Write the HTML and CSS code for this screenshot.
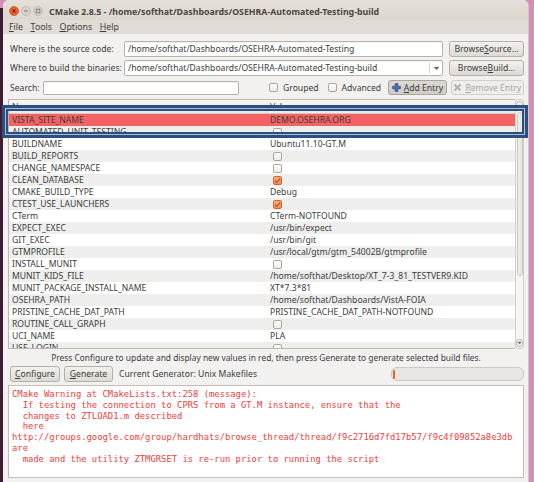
FILE: index.html
```html
<!DOCTYPE html>
<html>
<head>
<meta charset="utf-8">
<title>CMake</title>
<link rel="stylesheet" href="styles.css">
</head>
<body>
<div class="desktop">
  <div class="edge-left"></div>
  <div class="window">
    <header class="titlebar">
      <div class="wbtns">
        <svg class="wb" width="10" height="10" viewBox="0 0 10 10"><circle cx="5" cy="5" r="4.5" fill="#e8612d" stroke="#c44a1c" stroke-width="0.6"/><path d="M3.3 3.3 L6.7 6.7 M6.7 3.3 L3.3 6.7" stroke="#5a2510" stroke-width="1"/></svg>
        <svg class="wb" width="10" height="10" viewBox="0 0 10 10"><circle cx="5" cy="5" r="4.5" fill="#d6d1c9" stroke="#b3ada4" stroke-width="0.6"/><path d="M3 5 H7" stroke="#7a746c" stroke-width="1"/></svg>
        <svg class="wb" width="10" height="10" viewBox="0 0 10 10"><circle cx="5" cy="5" r="4.5" fill="#d6d1c9" stroke="#b3ada4" stroke-width="0.6"/><rect x="3.2" y="3.2" width="3.6" height="3.6" fill="none" stroke="#7a746c" stroke-width="0.9"/></svg>
      </div>
      <div class="title">CMake 2.8.5 - /home/softhat/Dashboards/OSEHRA-Automated-Testing-build</div>
    </header>
    <nav class="menubar">
      <span><u>F</u>ile</span>
      <span><u>T</u>ools</span>
      <span><u>O</u>ptions</span>
      <span><u>H</u>elp</span>
    </nav>
    <main class="content">
      <div class="pathrow">
        <div class="plabel">Where is the source code:</div>
        <div class="field">/home/softhat/Dashboards/OSEHRA-Automated-Testing</div>
        <div class="btn browse">Browse <u>S</u>ource...</div>
      </div>
      <div class="pathrow">
        <div class="plabel">Where to build the binaries:</div>
        <div class="field combo">
          <span class="combo-text">/home/softhat/Dashboards/OSEHRA-Automated-Testing-build</span>
          <span class="combo-arrow"><svg width="7" height="5" viewBox="0 0 7 5"><path d="M0.5 1 L3.5 4 L6.5 1 Z" fill="#6e6962"/></svg></span>
        </div>
        <div class="btn browse">Browse <u>B</u>uild...</div>
      </div>
      <div class="searchrow">
        <div class="slabel">Search:</div>
        <div class="field search"></div>
        <div class="check first"><span class="cb"></span>Grouped</div>
        <div class="check"><span class="cb"></span>Advanced</div>
        <div class="btn tool add">
          <svg width="9" height="9" viewBox="0 0 9 9"><path d="M3.2 0.6 H5.8 V3.2 H8.4 V5.8 H5.8 V8.4 H3.2 V5.8 H0.6 V3.2 H3.2 Z" fill="#3f6fb5" stroke="#1f3f78" stroke-width="0.6"/></svg>
          <span><u>A</u>dd Entry</span>
        </div>
        <div class="btn tool remove">
          <svg width="9" height="9" viewBox="0 0 9 9"><path d="M1.5 1.5 L7.5 7.5 M7.5 1.5 L1.5 7.5" stroke="#b5b1ab" stroke-width="2.2"/></svg>
          <span><u>R</u>emove Entry</span>
        </div>
      </div>

      <div class="table">
        <div class="grid">
          <div class="hdr"><span class="c1">Name</span><span class="c2">Value</span></div>
          <div class="row hl"><span class="c1">VISTA_SITE_NAME</span><span class="c2">DEMO.OSEHRA.ORG</span></div>
          <div class="row alt"><span class="c1">AUTOMATED_UNIT_TESTING</span><span class="c2"><span class="cb"></span></span></div>
          <div class="row"><span class="c1">BUILDNAME</span><span class="c2">Ubuntu11.10-GT.M</span></div>
          <div class="row alt"><span class="c1">BUILD_REPORTS</span><span class="c2"><span class="cb"></span></span></div>
          <div class="row"><span class="c1">CHANGE_NAMESPACE</span><span class="c2"><span class="cb"></span></span></div>
          <div class="row alt"><span class="c1">CLEAN_DATABASE</span><span class="c2"><span class="cb on"><svg width="7" height="7" viewBox="0 0 7 7"><path d="M1 3.6 L2.8 5.4 L6.2 1.2" fill="none" stroke="#c9501f" stroke-width="1.3"/></svg></span></span></div>
          <div class="row"><span class="c1">CMAKE_BUILD_TYPE</span><span class="c2">Debug</span></div>
          <div class="row alt"><span class="c1">CTEST_USE_LAUNCHERS</span><span class="c2"><span class="cb on"><svg width="7" height="7" viewBox="0 0 7 7"><path d="M1 3.6 L2.8 5.4 L6.2 1.2" fill="none" stroke="#c9501f" stroke-width="1.3"/></svg></span></span></div>
          <div class="row"><span class="c1">CTerm</span><span class="c2">CTerm-NOTFOUND</span></div>
          <div class="row alt"><span class="c1">EXPECT_EXEC</span><span class="c2">/usr/bin/expect</span></div>
          <div class="row"><span class="c1">GIT_EXEC</span><span class="c2">/usr/bin/git</span></div>
          <div class="row alt"><span class="c1">GTMPROFILE</span><span class="c2">/usr/local/gtm/gtm_54002B/gtmprofile</span></div>
          <div class="row"><span class="c1">INSTALL_MUNIT</span><span class="c2"><span class="cb"></span></span></div>
          <div class="row alt"><span class="c1">MUNIT_KIDS_FILE</span><span class="c2">/home/softhat/Desktop/XT_7-3_81_TESTVER9.KID</span></div>
          <div class="row"><span class="c1">MUNIT_PACKAGE_INSTALL_NAME</span><span class="c2">XT*7.3*81</span></div>
          <div class="row alt"><span class="c1">OSEHRA_PATH</span><span class="c2">/home/softhat/Dashboards/VistA-FOIA</span></div>
          <div class="row"><span class="c1">PRISTINE_CACHE_DAT_PATH</span><span class="c2">PRISTINE_CACHE_DAT_PATH-NOTFOUND</span></div>
          <div class="row alt"><span class="c1">ROUTINE_CALL_GRAPH</span><span class="c2"><span class="cb"></span></span></div>
          <div class="row"><span class="c1">UCI_NAME</span><span class="c2">PLA</span></div>
          <div class="row alt"><span class="c1">USE_LOGIN</span><span class="c2"><span class="cb"></span></span></div>
        </div>
        <div class="vscroll">
          <div class="step up"></div>
          <div class="thumb"></div>
          <div class="spacer"></div>
          <div class="step down"><svg width="5" height="4" viewBox="0 0 5 4"><path d="M0.3 0.8 L2.5 3.3 L4.7 0.8 Z" fill="#77716a"/></svg></div>
        </div>
      </div>

      <div class="hint">Press Configure to update and display new values in red, then press Generate to generate selected build files.</div>

      <div class="actions">
        <div class="btn act"><u>C</u>onfigure</div>
        <div class="btn act gen"><u>G</u>enerate</div>
        <div class="generator">Current Generator: Unix Makefiles</div>
        <div class="progress"><span class="pfill"></span></div>
      </div>

      <pre class="output">CMake Warning at CMakeLists.txt:258 (message):
  If testing the connection to CPRS from a GT.M instance, ensure that the
  changes to ZTLOAD1.m described
  here
http://groups.google.com/group/hardhats/browse_thread/thread/f9c2716d7fd17b57/f9c4f09852a8e3db
are
  made and the utility ZTMGRSET is re-run prior to running the script</pre>
    </main>
  </div>
  <div class="edge-right"></div>
  <div class="annot"></div>
</div>
</body>
</html>
```

FILE: styles.css
```css
* { box-sizing: border-box; }
html, body { margin: 0; padding: 0; }
body {
  width: 534px;
  height: 482px;
  overflow: hidden;
  font-family: "Noto Sans", "DejaVu Sans", sans-serif;
  font-size: 8.6px;
  color: #3c3c3c;
}
u { text-decoration: underline; text-underline-offset: 1px; }

.desktop {
  position: relative;
  display: flex;
  width: 534px;
  height: 482px;
  background: #d88db7;
}
.edge-left { width: 3px; background: #3d1d33; margin-top: 8px; }
.edge-right { width: 5px; background: #d88db7; }

.window {
  flex: 1;
  display: flex;
  flex-direction: column;
  background: #f2f1f0;
  border-radius: 6px 6px 0 0;
  overflow: hidden;
  border-right: 1px solid #cfcbc4;
}

.titlebar {
  height: 20px;
  display: flex;
  align-items: center;
  background: linear-gradient(#e4e0d9, #dcd8d0);
}
.wbtns { display: flex; gap: 2px; padding-left: 6px; margin-top: 2px; }
.wb { display: block; }
.title {
  margin-left: 6px;
  font-weight: bold;
  font-size: 8.8px;
  color: #4a4740;
  margin-top: 3px;
  white-space: nowrap;
}

.menubar {
  height: 14px;
  display: flex;
  align-items: center;
  gap: 7.5px;
  padding-left: 6px;
  background: #e0dcd5;
  font-size: 8.8px;
  color: #3c3c3c;
}

.content {
  flex: 1;
  display: flex;
  flex-direction: column;
  padding: 0 4px 0 5px;
}

.pathrow {
  display: flex;
  align-items: center;
  height: 16px;
  margin-top: 7px;
}
.pathrow + .pathrow { margin-top: 3px; }
.plabel { width: 116px; padding-left: 2px; }
.field {
  height: 16px;
  background: #fff;
  border: 1px solid #b7b2aa;
  border-radius: 2px;
  box-shadow: inset 0 1px 1px rgba(0,0,0,0.06);
  padding: 0 3px;
  line-height: 14px;
  white-space: nowrap;
  overflow: hidden;
}
.pathrow .field { width: 319px; }
.combo { display: flex; padding-right: 0; }
.combo-text { flex: 1; }
.combo-arrow {
  width: 13px;
  border-left: 1px solid #d7d3cd;
  display: flex;
  align-items: center;
  justify-content: center;
  margin: 2px 0;
}
.btn {
  height: 16px;
  border: 1px solid #b4afa7;
  border-radius: 3px;
  background: linear-gradient(#f3f1ee, #dedad4);
  display: flex;
  align-items: center;
  justify-content: center;
  white-space: nowrap;
  color: #3c3c3c;
}
.browse { width: 75px; margin-left: 6px; }

.searchrow {
  display: flex;
  align-items: center;
  height: 15px;
  margin-top: 4px;
}
.slabel { width: 35px; padding-left: 2px; }
.field.search { width: 198px; height: 14px; }
.check { display: flex; align-items: center; gap: 5px; margin-left: 9px; }
.check.first { margin-left: 30px; }
.cb {
  display: inline-flex;
  align-items: center;
  justify-content: center;
  width: 9px;
  height: 9px;
  border: 1px solid #aca69e;
  border-radius: 2px;
  background: linear-gradient(#ffffff, #eeebe7);
}
.cb.on {
  background: linear-gradient(#f8b08d, #f08a5b);
  border-color: #d8652f;
}
.tool { height: 15px; gap: 3px; }
.add {
  width: 59px;
  margin-left: 7px;
  background: linear-gradient(#dcd8d2, #d0ccc5);
  border-color: #aaa59d;
}
.remove {
  width: 74px;
  margin-left: 4px;
  color: #aaa6a0;
  background: #efedea;
  border-color: #d2cec8;
}

.table {
  display: flex;
  height: 250px;
  margin-top: 4px;
}
.grid {
  flex: 1;
  border: 1px solid #bcb7af;
  border-right: none;
  background: #fff;
  overflow: hidden;
}
.hdr {
  display: flex;
  height: 14px;
  align-items: center;
  background: linear-gradient(#f7f6f4, #ebe9e5);
  border-bottom: 1px solid #d2cec8;
}
.row {
  display: flex;
  height: 12px;
  align-items: center;
  white-space: nowrap;
}
.row.alt { background: #eeeeec; }
.row.hl { background: #f46363; }
.c1 { width: 260px; padding-left: 3px; }
.c2 { padding-left: 1px; display: flex; align-items: center; }
.row .cb { margin-left: 3px; }

.vscroll {
  width: 9px;
  display: flex;
  flex-direction: column;
  align-items: center;
  border: 1px solid #d3cfc9;
  border-radius: 3px;
  background: #f6f5f3;
}
.step {
  width: 7px;
  height: 8px;
  border: 1px solid #c2bdb6;
  border-radius: 3px;
  background: #f1efec;
  display: flex;
  align-items: center;
  justify-content: center;
}
.step.up { margin-top: 1px; }
.thumb {
  width: 6px;
  height: 164px;
  margin-top: 3px;
  border: 1px solid #cdc9c2;
  border-radius: 3px;
  background: linear-gradient(90deg, #f1efec, #e6e3de);
}
.spacer { flex: 1; }
.step.down { margin-bottom: 1px; }

.hint {
  height: 17px;
  line-height: 17px;
  text-align: center;
  white-space: nowrap;
  font-size: 8.4px;
}

.actions {
  display: flex;
  align-items: center;
  height: 16px;
}
.act { width: 50px; margin-left: 2px; }
.act.gen { width: 49px; margin-left: 4px; }
.generator { margin-left: 6px; white-space: nowrap; }
.progress {
  margin-left: auto;
  width: 133px;
  height: 14px;
  border: 1px solid #cdc8c1;
  border-radius: 6px;
  background: #e8e6e2;
  display: flex;
  align-items: center;
  padding-left: 1px;
}
.pfill {
  width: 2px;
  height: 9px;
  background: #e2652a;
  border-radius: 1px;
}

.output {
  margin: 3px 0 0 0;
  height: 93px;
  border: 1px solid #c3bfb8;
  background: #fff;
  padding: 3px 0 0 3px;
  font-family: "DejaVu Sans Mono", "Liberation Mono", monospace;
  font-size: 8.85px;
  line-height: 10.8px;
  color: #f23c3c;
  white-space: pre;
  overflow: hidden;
}

.annot {
  position: absolute;
  left: 2px;
  top: 105px;
  width: 526px;
  height: 33px;
  border: 3px solid #2b4f80;
  box-shadow: inset 0 0 0 1px #a9bdd6, inset 0 0 0 3px #2b4f80;
  pointer-events: none;
}
```
